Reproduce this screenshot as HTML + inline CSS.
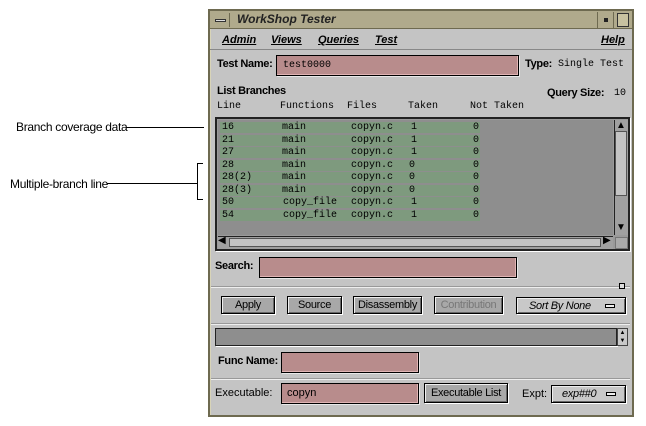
<!DOCTYPE html>
<html><head><style>
*{margin:0;padding:0;box-sizing:border-box}
body{width:646px;height:426px;background:#fff;position:relative;overflow:hidden;font-family:"Liberation Sans",sans-serif;font-size:11px;color:#000}
.a{position:absolute}
.lbl{position:absolute;font-weight:bold;font-size:11px;letter-spacing:-0.3px}
.mono{font-family:"Liberation Mono",monospace;font-size:10px}
.inp{position:absolute;background:#b88c8c;border:1px solid #000;box-shadow:inset -1px -1px 0 #e0b4b4,1px 1px 0 #e8e8e8}
.btn{position:absolute;background:#a8a8a8;border:1px solid #000;box-shadow:inset 1px 1px 0 #eee,inset -1px -1px 0 #666,1px 1px 0 #fff;text-align:center;font-size:11px;line-height:16px;letter-spacing:-0.3px}
.sep{position:absolute;left:211px;width:419px;height:2px;border-top:1px solid #999;border-bottom:1px solid #eee}
.row{position:absolute;left:220px;width:260px;height:11px;background:#7e9a7e;line-height:11px}
.row span{position:absolute}
</style></head><body>
<div class="a" style="left:16px;top:120px;font-size:12px;letter-spacing:-0.3px">Branch coverage data</div>
<div class="a" style="left:126px;top:127px;width:78px;height:1px;background:#000"></div>
<div class="a" style="left:10px;top:177px;font-size:12px;letter-spacing:-0.3px">Multiple-branch line</div>
<div class="a" style="left:107px;top:183px;width:91px;height:1px;background:#000"></div>
<div class="a" style="left:197px;top:163px;width:6px;height:37px;border:1px solid #000;border-right:none"></div>

<div class="a" style="left:208px;top:9px;width:426px;height:408px;background:#c4c4c4;border:2px solid #6e6a50;box-shadow:inset 1px 1px 0 #d8d4b8"></div>
<div class="a" style="left:210px;top:11px;width:422px;height:18px;background:#b0aa8c;border-bottom:1px solid #6e6a50"></div>
<div class="a" style="left:212px;top:13px;width:18px;height:14px;border-right:1px solid #6e6a50"><div class="a" style="left:3px;top:6px;width:11px;height:3px;border:1px solid #333;background:#ddd"></div></div>
<div class="a" style="left:237px;top:12px;font-weight:bold;font-style:italic;font-size:12px;color:#222">WorkShop Tester</div>
<div class="a" style="left:597px;top:12px;width:17px;height:16px;border-left:1px solid #6e6a50;border-right:1px solid #6e6a50"><div class="a" style="left:6px;top:6px;width:4px;height:4px;background:#222"></div></div>
<div class="a" style="left:617px;top:13px;width:12px;height:14px;border:1px solid #333;background:#c8c2a0"></div>
<div class="a" style="left:210px;top:30px;width:422px;height:20px;border-bottom:1px solid #888;font-style:italic;font-weight:bold;font-size:11px">
<span class="a" style="left:12px;top:4px;text-decoration:underline">Admin</span>
<span class="a" style="left:61px;top:4px;text-decoration:underline">Views</span>
<span class="a" style="left:108px;top:4px;text-decoration:underline">Queries</span>
<span class="a" style="left:165px;top:4px;text-decoration:underline">Test</span>
<span class="a" style="left:391px;top:4px;text-decoration:underline">Help</span></div>

<div class="lbl" style="left:217px;top:58px">Test Name:</div>
<div class="inp" style="left:276px;top:55px;width:243px;height:21px"><span class="mono a" style="left:6px;top:4px">test0000</span></div>
<div class="lbl" style="left:525px;top:58px">Type:</div>
<div class="a mono" style="left:558px;top:59px">Single Test</div>
<div class="lbl" style="left:217px;top:85px">List Branches</div>
<div class="lbl" style="left:547px;top:87px">Query Size:</div>
<div class="a mono" style="left:614px;top:88px">10</div>
<div class="a mono" style="left:217px;top:101px">Line</div>
<div class="a mono" style="left:280px;top:101px">Functions</div>
<div class="a mono" style="left:347px;top:101px">Files</div>
<div class="a mono" style="left:408px;top:101px">Taken</div>
<div class="a mono" style="left:470px;top:101px">Not Taken</div>

<div class="a" style="left:215px;top:117px;width:415px;height:134px;background:#9a9a9a;border:2px solid #222;box-shadow:1px 1px 0 #fff"></div>
<div class="a" style="left:218px;top:120px;width:395px;height:115px;background:#8e8e8e"></div>
<div class="a mono">
<div class="row" style="top:122px"><span style="left:2px">16</span><span style="left:62px">main</span><span style="left:131px">copyn.c</span><span style="left:191px">1</span><span style="left:253px">0</span></div>
<div class="row" style="top:134.5px"><span style="left:2px">21</span><span style="left:62px">main</span><span style="left:131px">copyn.c</span><span style="left:191px">1</span><span style="left:253px">0</span></div>
<div class="row" style="top:147px"><span style="left:2px">27</span><span style="left:62px">main</span><span style="left:131px">copyn.c</span><span style="left:191px">1</span><span style="left:253px">0</span></div>
<div class="row" style="top:159.5px"><span style="left:2px">28</span><span style="left:62px">main</span><span style="left:131px">copyn.c</span><span style="left:189px">0</span><span style="left:253px">0</span></div>
<div class="row" style="top:172px"><span style="left:2px">28(2)</span><span style="left:62px">main</span><span style="left:131px">copyn.c</span><span style="left:189px">0</span><span style="left:253px">0</span></div>
<div class="row" style="top:184.5px"><span style="left:2px">28(3)</span><span style="left:62px">main</span><span style="left:131px">copyn.c</span><span style="left:189px">0</span><span style="left:253px">0</span></div>
<div class="row" style="top:197px"><span style="left:2px">50</span><span style="left:63px">copy_file</span><span style="left:131px">copyn.c</span><span style="left:191px">1</span><span style="left:253px">0</span></div>
<div class="row" style="top:209.5px"><span style="left:2px">54</span><span style="left:63px">copy_file</span><span style="left:131px">copyn.c</span><span style="left:191px">1</span><span style="left:253px">0</span></div>
</div>
<div class="a" style="left:614px;top:120px;width:14px;height:115px;background:#a0a0a0;border-left:1px solid #222"></div>
<div class="a" style="left:615px;top:131px;width:12px;height:65px;background:#c4c4c4;border:1px solid #555"></div>
<div class="a" style="left:616px;top:120px;font-size:10px">▲</div>
<div class="a" style="left:616px;top:222px;font-size:10px">▼</div>
<div class="a" style="left:218px;top:236px;width:395px;height:13px;background:#a0a0a0;border-top:1px solid #222"></div>
<div class="a" style="left:229px;top:238px;width:372px;height:9px;background:#c4c4c4;border:1px solid #555"></div>
<div class="a" style="left:218px;top:235px;font-size:10px">◀</div>
<div class="a" style="left:603px;top:235px;font-size:10px">▶</div>
<div class="a" style="left:615px;top:237px;width:13px;height:12px;background:#aaa;border:1px solid #777"></div>

<div class="lbl" style="left:215px;top:260px">Search:</div>
<div class="inp" style="left:259px;top:257px;width:258px;height:21px"></div>
<div class="sep" style="top:286px"></div>
<div class="a" style="left:619px;top:283px;width:6px;height:6px;border:1px solid #000;background:#ddd"></div>

<div class="btn" style="left:221px;top:296px;width:54px;height:18px">Apply</div>
<div class="btn" style="left:287px;top:296px;width:55px;height:18px">Source</div>
<div class="btn" style="left:353px;top:296px;width:69px;height:18px">Disassembly</div>
<div class="btn" style="left:434px;top:296px;width:69px;height:18px;color:#777">Contribution</div>
<div class="btn" style="left:516px;top:297px;width:110px;height:17px;background:#c8c8c8;font-style:italic;text-align:left;padding-left:12px">Sort By None<span class="a" style="left:88px;top:6px;width:10px;height:4px;border:1px solid #000;background:#eee"></span></div>
<div class="sep" style="top:323px"></div>
<div class="a" style="left:215px;top:328px;width:402px;height:18px;background:#8e8e8e;border:1px solid #222;box-shadow:1px 1px 0 #fff"></div>
<div class="a" style="left:617px;top:328px;width:11px;height:18px;background:#c8c8c8;border:1px solid #444;font-size:6px;line-height:8px;text-align:center">▲<br>▼</div>

<div class="lbl" style="left:218px;top:355px">Func Name:</div>
<div class="inp" style="left:281px;top:352px;width:138px;height:21px"></div>
<div class="sep" style="top:378px"></div>
<div class="a" style="left:215px;top:387px;font-size:11px">Executable:</div>
<div class="inp" style="left:281px;top:383px;width:138px;height:21px"><span class="a" style="left:5px;top:3px;font-size:11px">copyn</span></div>
<div class="btn" style="left:424px;top:383px;width:84px;height:20px;line-height:18px">Executable List</div>
<div class="a" style="left:522px;top:388px;font-size:11px">Expt:</div>
<div class="btn" style="left:551px;top:385px;width:75px;height:18px;background:#c8c8c8;font-style:italic;text-align:left;padding-left:10px">exp##0<span class="a" style="left:54px;top:6px;width:10px;height:4px;border:1px solid #000;background:#eee"></span></div>
</body></html>
